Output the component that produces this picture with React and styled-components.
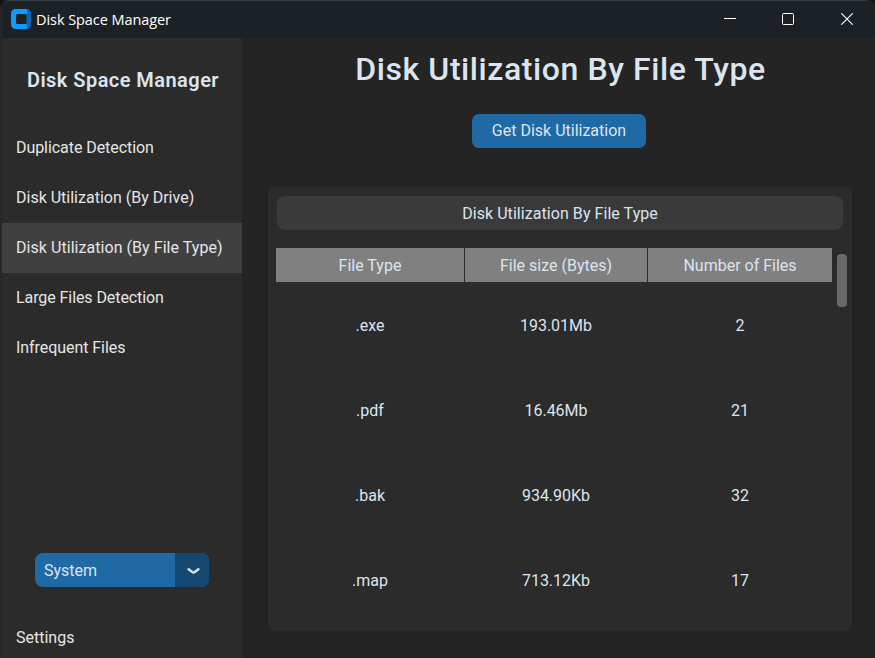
import React from "react";
import styled, { createGlobalStyle } from "styled-components";

const GlobalStyle = createGlobalStyle`
  * { box-sizing: border-box; }
  html, body { margin: 0; height: 100%; background: #16191b; overflow: hidden; }
  button { border: 0; padding: 0; margin: 0; background: none; color: inherit; font: inherit; text-align: left; }
`;

const Desktop = styled.div`
  width: 875px;
  height: 658px;
  background: #111517;
  color: #dce4ee;
  font: 400 16px/20px Roboto, sans-serif;
`;

const Window = styled.div`
  height: 658px;
  display: flex;
  flex-direction: column;
  background: #242424;
  border: solid #3a3e41;
  border-width: 1px 0 0 2px;
  border-left-color: #24282b;
  border-radius: 9px 9px 0 0;
  overflow: hidden;
`;

const TitleBar = styled.header`
  height: 37px;
  flex: none;
  display: flex;
  align-items: center;
  padding: 0 0 1px 9px;
  background: #1c2126;
`;

const WindowTitle = styled.span`
  flex: 1;
  margin-left: 5px;
  padding-top: 2px;
  color: #fff;
  font: 400 14.5px/20px "Open Sans", sans-serif;
  letter-spacing: -0.07px;
`;

const WindowButton = styled.button`
  width: 58.5px;
  height: 36px;
  display: flex;
  align-items: center;
  justify-content: center;
  padding-left: 2px;
`;

const Body = styled.div`
  flex: 1;
  display: flex;
  min-height: 0;
`;

const Sidebar = styled.nav`
  width: 240px;
  flex: none;
  display: flex;
  flex-direction: column;
  background: #2b2b2b;
`;

const Brand = styled.h2`
  margin: 32px 0 33px;
  padding-left: 25px;
  font-size: 20px;
  line-height: 20px;
  font-weight: 600;
  letter-spacing: 0.45px;
  white-space: nowrap;
`;

const NavItem = styled.button`
  height: ${(p) => (p.$footer ? "41px" : "50px")};
  flex: none;
  padding-left: 14px;
  white-space: nowrap;
  color: #e5e5e5;
  letter-spacing: ${(p) => p.$spacing || "0"};
  background: ${(p) => (p.$active ? "#404040" : "transparent")};
`;

const Spacer = styled.div`
  flex: 1;
`;

const Select = styled.button`
  width: 174px;
  height: 34px;
  flex: none;
  display: flex;
  margin: 0 0 30px 33px;
  border-radius: 8px;
  overflow: hidden;
  background: #1f6aa5;
`;

const SelectLabel = styled.span`
  flex: 1;
  padding: 1px 0 0 9px;
  line-height: 34px;
`;

const SelectArrow = styled.span`
  width: 34px;
  display: flex;
  align-items: center;
  justify-content: center;
  padding: 1px 0 0 2px;
  background: #144870;
`;

const Main = styled.main`
  flex: 1;
  display: flex;
  flex-direction: column;
  align-items: center;
  padding: 11px 23px 27px 26px;
`;

const Heading = styled.h1`
  margin: 0 0 25px 1px;
  font-size: 32px;
  line-height: 40px;
  font-weight: 500;
  letter-spacing: 0.58px;
  white-space: nowrap;
`;

const PrimaryButton = styled.button`
  width: 174px;
  height: 34px;
  flex: none;
  margin: 0 0 39px -2px;
  border-radius: 7px;
  background: #1f6aa5;
  text-align: center;
`;

const Panel = styled.section`
  align-self: stretch;
  flex: 1;
  padding: 9px 5px 0 8px;
  border-radius: 8px;
  background: #2b2b2b;
`;

const PanelTitle = styled.div`
  height: 34px;
  margin: 0 4px 18px 1px;
  padding-top: 1px;
  border-radius: 8px;
  background: #3a3a3a;
  line-height: 34px;
  letter-spacing: 0.06px;
  text-align: center;
`;

const ScrollArea = styled.div`
  display: flex;
  justify-content: space-between;
`;

const Table = styled.div`
  width: 556px;
`;

const Row = styled.div`
  display: grid;
  grid-template-columns: 188px 182px 184px;
  column-gap: 1px;
  height: ${(p) => (p.$header ? "34px" : "85px")};
  margin-bottom: ${(p) => (p.$header ? "1px" : "0")};
`;

const Cell = styled.div`
  display: flex;
  align-items: center;
  justify-content: center;
  padding-top: ${(p) => (p.$header ? "2px" : "0")};
  background: ${(p) => (p.$header ? "#808080" : "transparent")};
`;

const ScrollThumb = styled.div`
  width: 10px;
  height: 53px;
  margin-top: 6px;
  border-radius: 4px;
  background: #696969;
`;

const Logo = () => (
  <svg width="20" height="20" viewBox="0 0 20 20">
    <path d="M13 0H15Q20 0 20 5V15Q20 20 15 20H13Z" fill="#0866b8" />
    <path d="M5 0H14.5Q16.5 0 16.5 2.5Q16.5 5 14.5 5V15Q16.5 15 16.5 17.5Q16.5 20 14.5 20H5Q0 20 0 15V5Q0 0 5 0Z" fill="#0a9bff" />
    <rect x="5" y="5" width="10.5" height="10" rx="1.5" fill="#1c2126" />
  </svg>
);

const navItems = [
  { label: "Duplicate Detection", spacing: "-0.06px" },
  { label: "Disk Utilization (By Drive)" },
  { label: "Disk Utilization (By File Type)", active: true, spacing: "0.05px" },
  { label: "Large Files Detection", spacing: "-0.08px" },
  { label: "Infrequent Files", spacing: "-0.06px" },
];

const rows = [
  [".exe", "193.01Mb", "2"],
  [".pdf", "16.46Mb", "21"],
  [".bak", "934.90Kb", "32"],
  [".map", "713.12Kb", "17"],
];

export default function App() {
  return (
    <Desktop>
      <GlobalStyle />
      <Window>
        <TitleBar>
          <Logo />
          <WindowTitle>Disk Space Manager</WindowTitle>
          <WindowButton aria-label="Minimize">
            <svg width="12" height="12" viewBox="0 0 12 12"><path d="M0 5.5H12" stroke="#fff" /></svg>
          </WindowButton>
          <WindowButton aria-label="Maximize">
            <svg width="12" height="12" viewBox="0 0 12 12"><rect x=".5" y=".5" width="11" height="11" rx="1" stroke="#fff" fill="none" /></svg>
          </WindowButton>
          <WindowButton aria-label="Close">
            <svg width="12" height="12" viewBox="0 0 12 12"><path d="M.3.3L11.7 11.7M11.7.3L.3 11.7" stroke="#fff" strokeWidth="1.1" /></svg>
          </WindowButton>
        </TitleBar>
        <Body>
          <Sidebar>
            <Brand>Disk Space Manager</Brand>
            {navItems.map((item) => (
              <NavItem key={item.label} $active={item.active} $spacing={item.spacing}>
                {item.label}
              </NavItem>
            ))}
            <Spacer />
            <Select>
              <SelectLabel>System</SelectLabel>
              <SelectArrow>
                <svg width="13" height="8" viewBox="0 0 13 8"><path d="M1.6 2.3L5.2 5Q6.5 5.8 7.8 5L11.4 2.3" stroke="#dce4ee" strokeWidth="2.5" strokeLinecap="round" fill="none" /></svg>
              </SelectArrow>
            </Select>
            <NavItem $footer>Settings</NavItem>
          </Sidebar>
          <Main>
            <Heading>Disk Utilization By File Type</Heading>
            <PrimaryButton>Get Disk Utilization</PrimaryButton>
            <Panel>
              <PanelTitle>Disk Utilization By File Type</PanelTitle>
              <ScrollArea>
                <Table>
                  <Row $header>
                    <Cell $header>File Type</Cell>
                    <Cell $header>File size (Bytes)</Cell>
                    <Cell $header>Number of Files</Cell>
                  </Row>
                  {rows.map((row) => (
                    <Row key={row[0]}>{row.map((cell) => <Cell key={cell}>{cell}</Cell>)}</Row>
                  ))}
                </Table>
                <ScrollThumb />
              </ScrollArea>
            </Panel>
          </Main>
        </Body>
      </Window>
    </Desktop>
  );
}
